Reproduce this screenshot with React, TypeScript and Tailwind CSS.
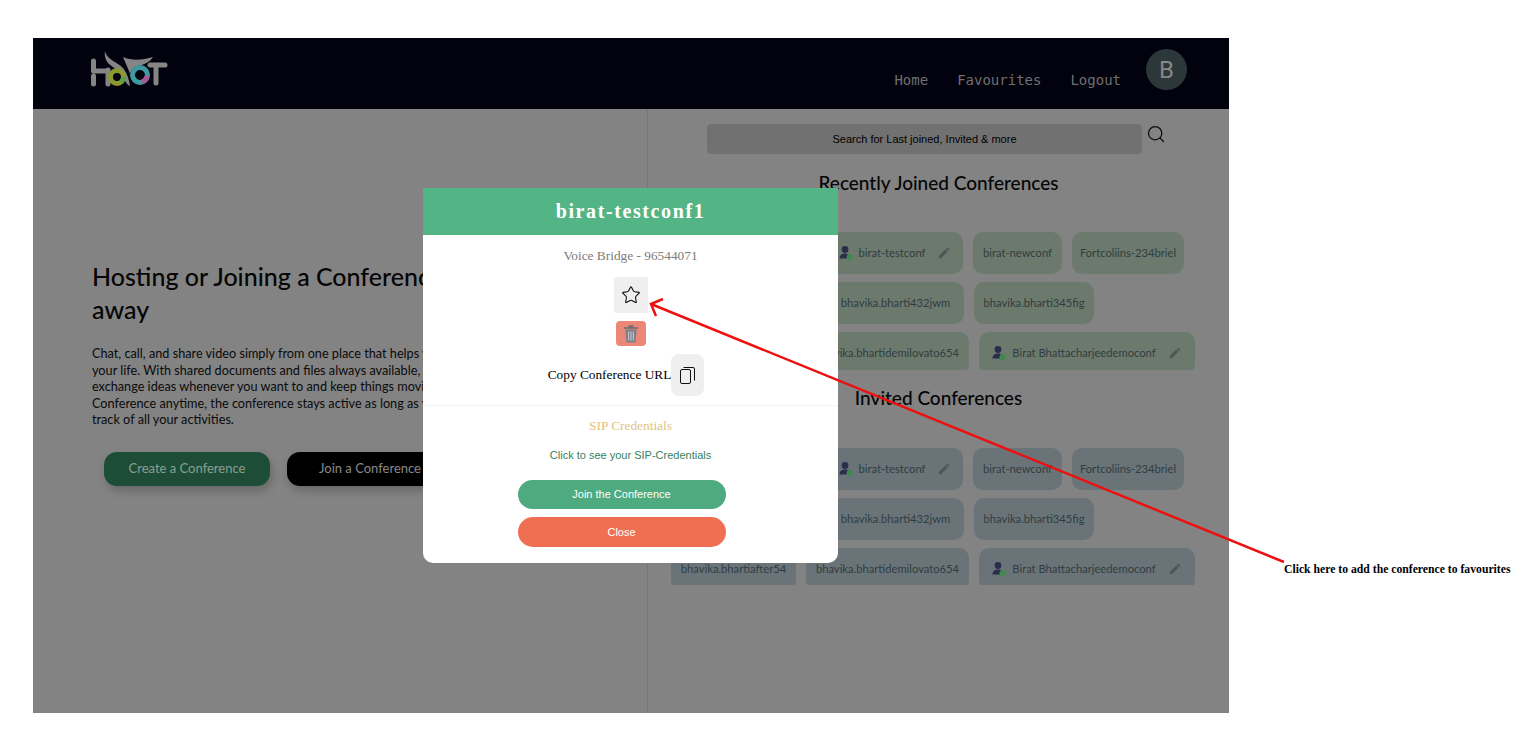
import { Search, Star } from 'lucide-react';
import { MdEdit } from 'react-icons/md';

interface ChipProps {
    label: string;
    owner?: boolean;
    widthClass: string;
    tone: string;
}

function OwnerIcon() {
    return (
        <svg className="w-[14px] h-[16px] shrink-0" viewBox="0 0 14 16">
            <circle cx="6" cy="4.5" r="3.4" fill="#2b2d4d" />
            <path d="M0.5 13.5c0-3.5 2.4-5 5.5-5s5.500 1.500 5.500 5z" fill="#2b2d4d" />
            <circle cx="10.500" cy="12" r="3" fill="#3c8a4c" />
        </svg>
    );
}

function Chip({ label, owner, widthClass, tone }: ChipProps) {
    return (
        <div className={`h-[42px] rounded-[10px] flex items-center justify-center gap-[6px] text-[11.2px] text-[#2f3d42] whitespace-nowrap shrink-0 ${widthClass} ${tone}`}>
            {owner && <OwnerIcon />}
            <span>{label}</span>
            {owner && <MdEdit className="ml-[6px] text-[#4f5557]" size={14} />}
        </div>
    );
}

function ChipBlock({ tone, clip }: { tone: string; clip: string }) {
    return (
        <div className={`overflow-hidden flex flex-col gap-[8px] ${clip}`}>
            <div className="flex gap-[10px]">
                <Chip widthClass="w-[146px]" tone={tone} label="bhavika.bharti12" />
                <Chip widthClass="w-[136px]" tone={tone} label="birat-testconf" owner />
                <Chip widthClass="w-[89px]" tone={tone} label="birat-newconf" />
                <Chip widthClass="w-[112px]" tone={tone} label="Fortcoliins-234briel" />
            </div>
            <div className="flex gap-[10px]">
                <Chip widthClass="w-[146px]" tone={tone} label="bhavika.bharti76" />
                <Chip widthClass="w-[137px]" tone={tone} label="bhavika.bharti432jwm" />
                <Chip widthClass="w-[120px]" tone={tone} label="bhavika.bharti345fig" />
            </div>
            <div className="flex gap-[10px]">
                <Chip widthClass="w-[125px]" tone={tone} label="bhavika.bhartiafter54" />
                <Chip widthClass="w-[163px]" tone={tone} label="bhavika.bhartidemilovato654" />
                <Chip widthClass="w-[216px]" tone={tone} label="Birat Bhattacharjeedemoconf" owner />
            </div>
        </div>
    );
}

function HootLogo() {
    return (
        <svg className="w-[80px] h-[38px]" viewBox="0 0 80 38" fill="none">
            <path d="M3.500 11v10M3.500 26v8M18 20v14M3.500 21h14" stroke="#858585" strokeWidth="5" strokeLinecap="round" />
            <path d="M15 1c1 6 7 9 13 13 6 4 10 9 12 22-3-1-5-5-7-9-3-6-9-9-14-13-3-3-5-8-4-13z" fill="#858585" />
            <path d="M33 7c9 4 20 3 30 0-3 5-9 8-16 9-4 1-6 4-7 8-2-6-5-12-7-17z" fill="#858585" />
            <circle cx="27" cy="27" r="6.500" stroke="#8a9a2c" strokeWidth="5" />
            <path d="M31 32a6.500 6.500 0 0 0 2.500-5" stroke="#58a048" strokeWidth="5" />
            <circle cx="50" cy="25" r="7.500" stroke="#3f9aa0" strokeWidth="5" />
            <path d="M52 32a7.500 7.500 0 0 0 5-6" stroke="#a8559a" strokeWidth="5" />
            <path d="M60 15h15M66 15v18" stroke="#858585" strokeWidth="5" strokeLinecap="round" />
        </svg>
    );
}

function Header() {
    return (
        <header className="h-[71px] bg-[#02020f] flex items-start justify-between pl-[57px] pr-[42px]">
            <div className="mt-[12px]">
                <HootLogo />
            </div>
            <div className="flex items-start">
                <nav className="flex gap-[29px] mt-[32px] text-[14px] leading-[20px] text-[#707070] font-['DejaVu_Sans_Mono',monospace]">
                    <span>Home</span>
                    <span>Favourites</span>
                    <span>Logout</span>
                </nav>
                <div className="w-[41px] h-[41px] ml-[25px] mt-[11px] rounded-full bg-[#2c373a] flex items-center justify-center text-[#878787] text-[24px] font-['Roboto',sans-serif]">
                    B
                </div>
            </div>
        </header>
    );
}

function IntroColumn() {
    return (
        <section className="w-[615px] h-full shrink-0 border-r border-[#787878] pl-[59px] pt-[151px]">
            <h1 className="text-[25px] leading-[33px] text-[#050505] font-medium whitespace-nowrap">
                Hosting or Joining a Conference is just a click<br />away
            </h1>
            <p className="mt-[19px] text-[12.7px] leading-[16.6px] text-[#0a0a0a] whitespace-nowrap">
                Chat, call, and share video simply from one place that helps you<br />
                your life. With shared documents and files always available, you<br />
                exchange ideas whenever you want to and keep things moving.<br />
                Conference anytime, the conference stays active as long as you<br />
                track of all your activities.
            </p>
            <div className="flex gap-[17px] mt-[24px] ml-[12px]">
                <button className="w-[166px] h-[34px] rounded-[13px] bg-[#1e4d37] text-[13px] text-[#8d9e94] shadow-[2px_5px_8px_rgba(0,0,0,0.2)]">
                    Create a Conference
                </button>
                <button className="w-[166px] h-[34px] rounded-[13px] bg-black text-[13px] text-[#8a8a8a] shadow-[2px_5px_8px_rgba(0,0,0,0.2)]">
                    Join a Conference
                </button>
            </div>
        </section>
    );
}

function ConferenceColumn() {
    return (
        <section className="flex-1 pl-[23px] pt-[15px]">
            <div className="flex items-start ml-[36px]">
                <div className="w-[435px] h-[30px] rounded-[4px] bg-[#717171] flex items-center justify-center text-[11px] text-black font-['Liberation_Sans',sans-serif]">
                    Search for Last joined, Invited &amp; more
                </div>
                <Search className="ml-[4px] text-[#0c0c0c]" size={20} strokeWidth={1.5} />
            </div>
            <h2 className="mt-[16px] ml-[-23px] w-[581px] text-center text-[19px] leading-[26px] text-[#050505] font-medium">
                Recently Joined Conferences
            </h2>
            <div className="mt-[36px]">
                <ChipBlock tone="bg-[#6c7a6d]" clip="h-[138px]" />
            </div>
            <h2 className="mt-[15px] ml-[-23px] w-[581px] text-center text-[19px] leading-[26px] text-[#050505] font-medium">
                Invited Conferences
            </h2>
            <div className="mt-[37px]">
                <ChipBlock tone="bg-[#6a7478]" clip="h-[137px]" />
            </div>
        </section>
    );
}

function ConferenceModal() {
    return (
        <div className="absolute left-[390px] top-[150px] w-[415px] h-[375px] bg-white rounded-b-[10px] overflow-hidden flex flex-col items-center font-['Liberation_Serif',serif]">
            <div className="w-full h-[47px] pb-[2px] bg-[#53b585] flex items-center justify-center text-white text-[20px] font-bold tracking-[1.6px]">
                birat-testconf1
            </div>
            <p className="mt-[13px] text-[13.33px] leading-[16px] text-[#7c7c7c]">Voice Bridge - 96544071</p>
            <button className="mt-[13px] w-[34px] h-[36px] rounded-[2px] bg-[#efefef] flex items-center justify-center">
                <Star className="text-[#111]" size={20} strokeWidth={1.3} />
            </button>
            <button className="mt-[8px] w-[30px] h-[25px] rounded-[4px] bg-[#ec8777] flex items-center justify-center">
                <svg className="w-[16px] h-[19px]" viewBox="0 0 16 19">
                    <path d="M1 3.200h14v1.500H1zM5.500 1.200h5v2h-5z" fill="#6e6e72" />
                    <path d="M2.300 5.500h11.400l-1 12a1 1 0 0 1-1 1H4.300a1 1 0 0 1-1-1z" fill="#7d8088" />
                    <path d="M5.600 7.500v9M8 7.500v9M10.400 7.500v9" stroke="#b9bcc6" strokeWidth="1.300" />
                </svg>
            </button>
            <div className="mt-[8px] ml-[-9px] flex items-center text-[13.33px] text-black">
                <span>Copy Conference URL</span>
                <button className="w-[33px] h-[42px] rounded-[8px] bg-[#efefef] flex items-center justify-center">
                    <svg className="w-[15px] h-[17px]" viewBox="0 0 15 17" fill="none" stroke="#111" strokeWidth="1">
                        <rect x="0.500" y="2.500" width="10" height="14" rx="1.500" />
                        <path d="M3.500 0.500h9.500a1.500 1.500 0 0 1 1.500 1.500v11.500" />
                    </svg>
                </button>
            </div>
            <div className="w-full mt-[9px] border-t border-[#f0f3f5]" />
            <p className="mt-[12px] text-[13.33px] leading-[16px] text-[#e0c47f]">SIP Credentials</p>
            <p className="mt-[14px] text-[11px] leading-[14px] text-[#38805c] font-['Liberation_Sans',sans-serif]">Click to see your SIP-Credentials</p>
            <button className="mt-[18px] ml-[-18px] w-[208px] h-[29px] rounded-[15px] bg-[#4eaa7f] text-white text-[11px] font-['Liberation_Sans',sans-serif]">
                Join the Conference
            </button>
            <button className="mt-[8px] ml-[-18px] w-[208px] h-[30px] rounded-[15px] bg-[#f06f52] text-white text-[11px] font-['Liberation_Sans',sans-serif]">
                Close
            </button>
        </div>
    );
}

export default function App() {
    return (
        <div className="relative w-[1528px] h-[742px] bg-white overflow-hidden pt-[38px] pl-[33px] font-['Lato',sans-serif]">
            <div className="relative w-[1196px] h-[675px] bg-[#838383] overflow-hidden flex flex-col">
                <Header />
                <main className="flex flex-1 min-h-0">
                    <IntroColumn />
                    <ConferenceColumn />
                </main>
                <ConferenceModal />
            </div>

            {/* annotation arrow drawn on top of the screenshot */}
            <svg className="absolute left-0 top-0 w-[1528px] h-[742px] pointer-events-none" viewBox="0 0 1528 742" fill="none" stroke="#ee0f0f" strokeWidth="2.500">
                <path d="M1284 562L651 304M663 299L651 304L656 316" />
            </svg>
            <p className="absolute left-[1284px] top-[563px] text-[11.7px] leading-[14px] font-bold text-black whitespace-nowrap font-['Liberation_Serif',serif]">
                Click here to add the conference to favourites
            </p>
        </div>
    );
}
